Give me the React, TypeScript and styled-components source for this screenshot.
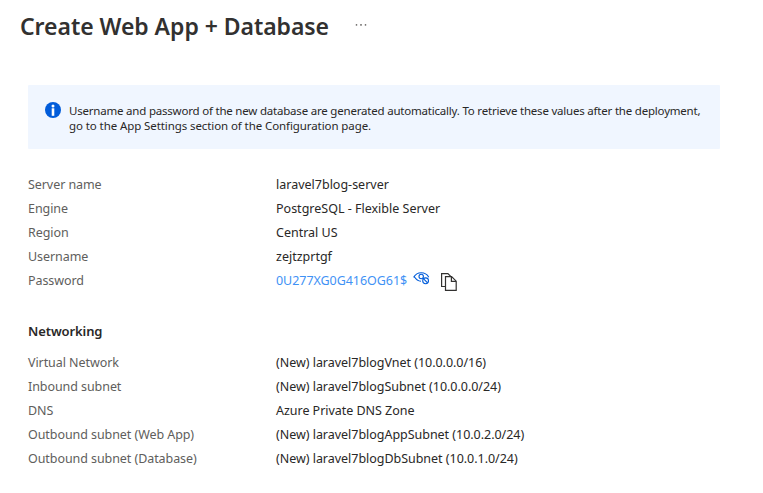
import React from 'react';
import styled, { createGlobalStyle } from 'styled-components';

const GlobalStyle = createGlobalStyle`
  * { box-sizing: border-box; }
  body { margin: 0; background: #fff; font-family: "Noto Sans", "Open Sans", sans-serif; color: #292827; }
`;

const Page = styled.main`
  width: 763px;
  height: 493px;
  overflow: hidden;
  background: #fff;
`;

const Header = styled.header`
  display: flex;
  align-items: center;
  gap: 27px;
  height: 50px;
  padding-left: 20px;
`;

const Title = styled.h1`
  margin: 1px 0 0;
  width: 308px;
  font-size: 23px;
  line-height: 32px;
  font-weight: 600;
  letter-spacing: -0.05px;
  white-space: nowrap;
  color: #323130;
`;

const IconButton = styled.button<{ $left?: number; $lift?: number }>`
  display: flex;
  flex: none;
  margin: 0 0 ${(p) => p.$lift ?? 0}px ${(p) => p.$left ?? 0}px;
  border: 0;
  padding: 0;
  background: none;
`;

const Notice = styled.section`
  display: flex;
  gap: 8px;
  width: 692px;
  height: 64px;
  margin: 35px 0 0 28px;
  padding: 17px 0 0 17px;
  border-radius: 1px;
  background: #f0f6ff;

  svg { flex: none; }
`;

const NoticeText = styled.p`
  margin: 1px 0 0;
  font-size: 11.5px;
  line-height: 15px;
  white-space: nowrap;
`;

const NoticeLine = styled.span<{ $track: number }>`
  display: block;
  letter-spacing: ${(p) => p.$track}px;
`;

const Group = styled.section<{ $top: number }>`
  margin: ${(p) => p.$top}px 0 0 28px;
`;

const GroupTitle = styled.h2`
  margin: 0 0 8px;
  font-size: 13px;
  line-height: 24px;
  font-weight: 600;
  letter-spacing: -0.1px;
`;

const Row = styled.div`
  display: grid;
  grid-template-columns: 248px 1fr;
  height: 24px;
  font-size: 12.5px;
  line-height: 24px;
  white-space: nowrap;
`;

const Label = styled.span`
  color: #605e5c;
  letter-spacing: -0.07px;
`;

const Value = styled.span<{ $track?: number }>`
  display: flex;
  align-items: center;
  letter-spacing: ${(p) => p.$track ?? 0}px;
`;

const Secret = styled.span`
  width: 131px;
  color: #3f92f5;
  letter-spacing: -0.05px;
`;

const rows = [
  ['Server name', 'laravel7blog-server'],
  ['Engine', 'PostgreSQL - Flexible Server'],
  ['Region', 'Central US'],
  ['Username', 'zejtzprtgf'],
];

const network = [
  ['Virtual Network', '(New) laravel7blogVnet (10.0.0.0/16)'],
  ['Inbound subnet', '(New) laravel7blogSubnet (10.0.0.0/24)'],
  ['DNS', 'Azure Private DNS Zone'],
  ['Outbound subnet (Web App)', '(New) laravel7blogAppSubnet (10.0.2.0/24)'],
  ['Outbound subnet (Database)', '(New) laravel7blogDbSubnet (10.0.1.0/24)'],
];

const InfoIcon = () => (
  <svg width="16" height="16" viewBox="0 0 16 16">
    <circle cx="8" cy="8" r="8" fill="#015cda" />
    <circle cx="8" cy="4" r="1.5" fill="#fff" />
    <path d="M6.700 6.300h2.600v7.500H6.700z" fill="#fff" />
  </svg>
);

const MoreIcon = () => (
  <svg width="12" height="2" viewBox="0 0 12 2" fill="#797775">
    <path d="M.8 0h1.400v1.800H.8zM5.200 0h1.600v1.800H5.200zM9.800 0h1.400v1.800H9.800z" />
  </svg>
);

const HideIcon = () => (
  <svg width="17" height="13" viewBox="0 0 17 13" fill="none" stroke="#015cda">
    <path d="M.6 5.400C4.200-.7 12.200-.7 15.800 5.200M1.500 5c1.500 2.500 3.500 4 6.500 4.300" strokeWidth="1.100" />
    <circle cx="8.200" cy="4.500" r="2.200" strokeWidth="1.100" />
    <circle cx="12.600" cy="8.800" r="2.900" fill="#fff" strokeWidth="1.100" />
    <path d="M10.600 6.800l4 4" strokeWidth="1.100" />
  </svg>
);

const CopyIcon = () => (
  <svg width="16" height="18" viewBox="0 0 16 18" fill="none" stroke="#323130" strokeWidth="1.200">
    <path d="M4.500 13.500H.6V.6h6.300l2.800 2.800" />
    <path d="M4.500 3.600h6.100l4.600 4.600v9.100H4.500z" fill="#fff" />
    <path d="M10.400 3.800v4.600H15" />
  </svg>
);

export default function App() {
  return (
    <Page>
      <GlobalStyle />
      <Header>
        <Title>Create Web App + Database</Title>
        <IconButton aria-label="More"><MoreIcon /></IconButton>
      </Header>
      <Notice>
        <InfoIcon />
        <NoticeText>
          <NoticeLine $track={-0.205}>Username and password of the new database are generated automatically. To retrieve these values after the deployment,</NoticeLine>
          <NoticeLine $track={-0.09}>go to the App Settings section of the Configuration page.</NoticeLine>
        </NoticeText>
      </Notice>
      <Group $top={24}>
        {rows.map(([label, value]) => (
          <Row key={label}><Label>{label}</Label><Value>{value}</Value></Row>
        ))}
        <Row>
          <Label>Password</Label>
          <Value>
            <Secret>0U277XG0G416OG61$</Secret>
            <IconButton $left={6} $lift={5} aria-label="Hide password"><HideIcon /></IconButton>
            <IconButton $left={11} $lift={-2} aria-label="Copy password"><CopyIcon /></IconButton>
          </Value>
        </Row>
      </Group>
      <Group $top={26}>
        <GroupTitle>Networking</GroupTitle>
        {network.map(([label, value]) => (
          <Row key={label}><Label>{label}</Label><Value $track={-0.03}>{value}</Value></Row>
        ))}
      </Group>
    </Page>
  );
}
